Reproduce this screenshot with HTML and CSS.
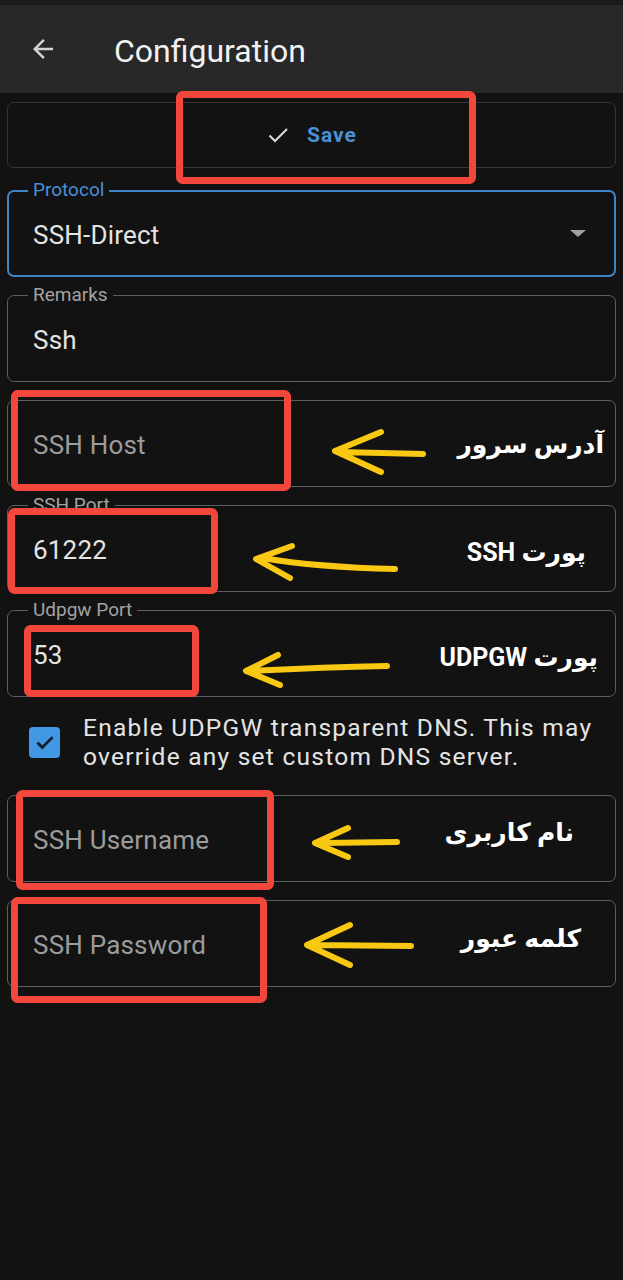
FILE: index.html
```html
<!DOCTYPE html>
<html lang="en">
<head>
  <meta charset="UTF-8" />
  <title>Configuration</title>
  <link rel="stylesheet" href="styles.css">
</head>
<body>

<header class="appbar">
  <svg class="back" viewBox="0 0 24 24"><path d="M20 11H7.83l5.59-5.59L12 4l-8 8 8 8 1.41-1.41L7.83 13H20v-2z"/></svg>
  <h1>Configuration</h1>
</header>

<main class="form">
  <div class="save-box">
    <svg class="save-check" viewBox="0 0 24 24"><path d="M3.5 12.5l5.5 5.5L21 6"/></svg>
    <span class="save-text">Save</span>
  </div>

  <div class="field field-active">
    <span class="field-label">Protocol</span>
    <span class="field-value">SSH-Direct</span>
    <span class="caret"></span>
  </div>

  <div class="field">
    <span class="field-label">Remarks</span>
    <span class="field-value">Ssh</span>
  </div>

  <div class="field">
    <span class="field-value placeholder">SSH Host</span>
    <span class="note note-host" dir="rtl">آدرس سرور</span>
  </div>

  <div class="field">
    <span class="field-label">SSH Port</span>
    <span class="field-value">61222</span>
    <span class="note note-port" dir="rtl">پورت SSH</span>
  </div>

  <div class="field">
    <span class="field-label">Udpgw Port</span>
    <span class="field-value">53</span>
    <span class="note note-udpgw" dir="rtl">پورت UDPGW</span>
  </div>

  <label class="check-row">
    <span class="checkbox">
      <svg viewBox="0 0 24 24"><path d="M5 12.5l4.5 4.5L19 7.5"/></svg>
    </span>
    <span class="check-text">Enable UDPGW transparent DNS. This may override any set custom DNS server.</span>
  </label>

  <div class="field">
    <span class="field-value placeholder">SSH Username</span>
    <span class="note note-user" dir="rtl">نام کاربری</span>
  </div>

  <div class="field">
    <span class="field-value placeholder">SSH Password</span>
    <span class="note note-pass" dir="rtl">کلمه عبور</span>
  </div>
</main>

<!-- annotation layer: red boxes and yellow arrows -->
<svg class="marks" viewBox="0 0 623 1280">
  <g class="boxes">
    <rect x="179.5" y="94.5" width="293" height="86" rx="3"/>
    <rect x="14.5" y="393.5" width="273" height="94" rx="3"/>
    <rect x="11.5" y="511.5" width="203" height="79" rx="3"/>
    <rect x="27.5" y="628.5" width="168" height="65" rx="3"/>
    <rect x="19.5" y="793.5" width="251" height="93" rx="3"/>
    <rect x="14.5" y="900.5" width="249" height="99" rx="3"/>
  </g>
  <g class="arrows">
    <path d="M423 454 L340 452 M381 432 L335 451 L381 472"/>
    <path d="M395 569 C350 568 310 566 262 558 M292 546 L256 559 L290 578"/>
    <path d="M387 666 C340 667 290 669 250 671 M278 655 L246 671 L280 685"/>
    <path d="M397 842 L322 843 M348 828 L315 843 L348 857"/>
    <path d="M411 946 L312 945 M350 925 L307 945 L350 965"/>
  </g>
</svg>

</body>
</html>
```

FILE: styles.css
```css
:root {
  --bg: #121212;
  --bar-bg: #282828;
  --blue: #4a90d6;
  --text: #e4e4e4;
  --muted: #a2a2a2;
  --line: #5e5e5e;
  --radius: 7px;
}

body {
  font-family: Roboto, 'Liberation Sans', sans-serif;
  background-color: var(--bg);
  color: var(--text);
  margin: 0;
  padding: 0;
  position: relative;
  min-height: 1280px;
}

.appbar {
  height: 88px;
  border-top: 5px solid #1b1b1b;
  background-color: var(--bar-bg);
  display: flex;
  align-items: center;
}

.appbar .back {
  width: 30px;
  height: 30px;
  margin-left: 28px;
  fill: #d4d4d4;
}

.appbar h1 {
  margin: 4px 0 0 56px;
  font-size: 32px;
  font-weight: 400;
  color: #f2f2f2;
}

.form {
  padding: 9px 7px 0;
}

.save-box {
  height: 64px;
  border: 1px solid #363636;
  border-radius: var(--radius);
  display: flex;
  align-items: center;
  justify-content: center;
  gap: 17px;
}

.save-check {
  width: 24px;
  height: 24px;
  fill: none;
  stroke: #dcdcdc;
  stroke-width: 2;
}

.save-text {
  color: var(--blue);
  font-size: 21px;
  font-weight: 700;
  letter-spacing: 1px;
}

.field {
  position: relative;
  height: 85px;
  margin-top: 18px;
  border: 1px solid var(--line);
  border-radius: var(--radius);
  display: flex;
  align-items: center;
  padding: 0 25px;
}

.save-box + .field {
  margin-top: 22px;
}

.field-active {
  border: 2px solid #3d85c8;
  height: 83px;
  padding: 0 24px;
}

.field-label {
  position: absolute;
  left: 20px;
  top: -12px;
  padding: 0 5px;
  background-color: var(--bg);
  font-size: 19px;
  line-height: 22px;
  color: var(--muted);
}

.field-active .field-label {
  left: 19px;
  top: -13px;
  color: var(--blue);
}

.field-value {
  margin-top: 3px;
  font-size: 26px;
  letter-spacing: 0.2px;
  color: var(--text);
}

.placeholder {
  color: #9c9c9c;
}

.caret {
  margin-left: auto;
  margin-right: 4px;
  width: 0;
  height: 0;
  border-left: 8px solid transparent;
  border-right: 8px solid transparent;
  border-top: 7px solid #a0a0a0;
}

.check-row {
  display: flex;
  align-items: center;
  gap: 23px;
  margin: 16px 0 6px;
  padding-left: 22px;
}

.checkbox {
  flex: none;
  width: 31px;
  height: 31px;
  border-radius: 4px;
  background-color: #4199e6;
  display: flex;
  align-items: center;
  justify-content: center;
}

.checkbox svg {
  width: 26px;
  height: 26px;
  fill: none;
  stroke: #13202c;
  stroke-width: 2.6;
}

.check-text {
  font-size: 24.5px;
  line-height: 29px;
  letter-spacing: 1.25px;
  color: var(--text);
}

.check-row + .field {
  margin-top: 24px;
}

.note {
  position: absolute;
  font-family: Roboto, 'DejaVu Sans', sans-serif;
  font-weight: 700;
  font-size: 25px;
  line-height: 30px;
  color: #ffffff;
}

.note-host { right: 11px; top: 29px; }
.note-port { right: 29px; top: 32px; }
.note-udpgw { right: 17px; top: 32px; }
.note-user { right: 41px; top: 22px; }
.note-pass { right: 34px; top: 23px; }

.marks {
  position: absolute;
  top: 0;
  left: 0;
  width: 623px;
  height: 1280px;
  pointer-events: none;
}

.marks .boxes rect {
  fill: none;
  stroke: #f2473a;
  stroke-width: 7;
}

.marks .arrows path {
  fill: none;
  stroke: #f8c812;
  stroke-width: 6;
  stroke-linecap: round;
  stroke-linejoin: round;
}
```
